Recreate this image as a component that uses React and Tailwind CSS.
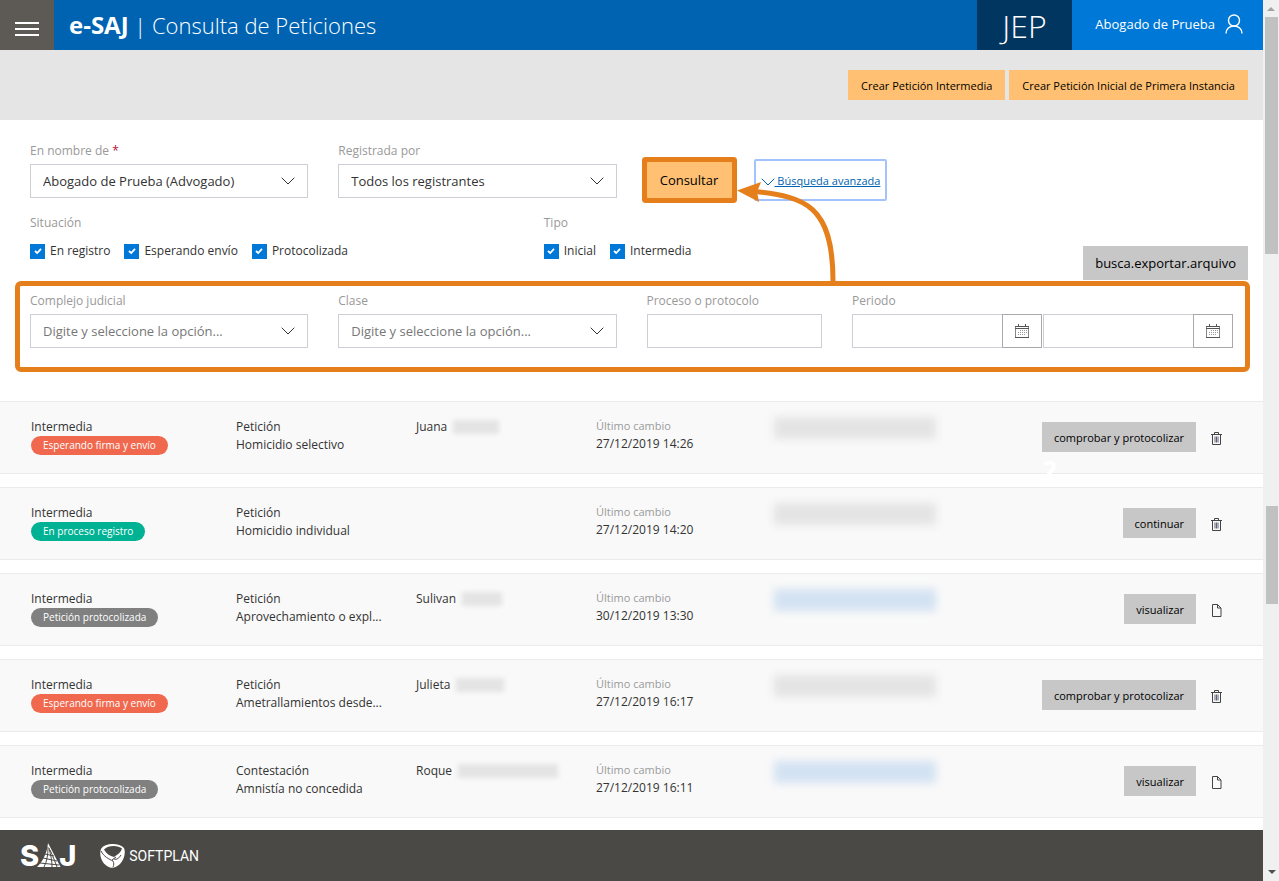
const situaciones = ["En registro", "Esperando envío", "Protocolizada"];
const tipos = ["Inicial", "Intermedia"];

const estados = {
  firma: { label: "Esperando firma y envío", color: "bg-[#f0694f]" },
  registro: { label: "En proceso registro", color: "bg-[#00b294]" },
  protocolizada: { label: "Petición protocolizada", color: "bg-[#808080]" },
};

const peticiones = [
  { estado: "firma", clase: "Petición", asunto: "Homicidio selectivo", nombre: "Juana", oculto: "w-[46px]", fecha: "27/12/2019 14:26", accion: "comprobar y protocolizar" },
  { estado: "registro", clase: "Petición", asunto: "Homicidio individual", fecha: "27/12/2019 14:20", accion: "continuar" },
  { estado: "protocolizada", clase: "Petición", asunto: "Aprovechamiento o expl...", nombre: "Sulivan", oculto: "w-10", fecha: "30/12/2019 13:30", accion: "visualizar" },
  { estado: "firma", clase: "Petición", asunto: "Ametrallamientos desde...", nombre: "Julieta", oculto: "w-12", fecha: "27/12/2019 16:17", accion: "comprobar y protocolizar" },
  { estado: "protocolizada", clase: "Contestación", asunto: "Amnistía no concedida", nombre: "Roque", oculto: "w-[100px]", fecha: "27/12/2019 16:11", accion: "visualizar" },
];

function Chevron({ className }) {
  return (
    <svg viewBox="0 0 14 8" fill="none" stroke="currentColor" className={className}>
      <path d="M0.7 0.7 7 7 13.3 0.7" />
    </svg>
  );
}

function CalendarIcon() {
  return (
    <svg width="14" height="14" viewBox="0 0 14 14" fill="none" stroke="#555" shapeRendering="crispEdges">
      <path d="M0.5 2v11M13.5 2v11" stroke="#888" />
      <path d="M0 2.5h14M0 13.5h14M0 4.5h14M3.5 0v2M10.5 0v2" />
      <path d="M5 6.5h7M3 8.5h9M3 10.5h7" stroke="#999" strokeDasharray="1 1" />
    </svg>
  );
}

function TrashIcon() {
  return (
    <svg width="11" height="13" viewBox="0 0 11 13" fill="none" stroke="#444">
      <path d="M0 2.5h11M3.5 2V0.5h4V2M1.5 2.5v10h8v-10" />
      <path d="M4 4.5v6M5.5 4.5v6M7 4.5v6" stroke="#5d6478" />
    </svg>
  );
}

function FileIcon() {
  return (
    <svg width="11" height="13" viewBox="0 0 11 13" fill="none" stroke="#444">
      <path d="M1.5 0.5h5l3.5 3.5v8.5h-8.5zM6.5 0.5v3.5h3.5" />
    </svg>
  );
}

function Select({ id, label, value, required, muted }) {
  return (
    <div className="col-span-3">
      <label htmlFor={id} className="mb-[3px] block pt-px text-[#999]">
        {label} {required && <span className="text-[#b5123e]">*</span>}
      </label>
      <div className="relative">
        <select
          id={id}
          className={`h-[34px] w-full appearance-none border border-[#ccd0d6] bg-white pr-8 pl-3 text-[13px] ${muted ? "text-[#777]" : "text-[#333]"}`}
        >
          <option>{value}</option>
        </select>
        <Chevron className="pointer-events-none absolute top-[13px] right-[13px] h-2 w-3.5 text-[#333]" />
      </div>
    </div>
  );
}

function Checks({ title, items }) {
  return (
    <fieldset>
      <legend className="mb-2 pt-px text-[#999]">{title}</legend>
      <div className="flex gap-3.5">
        {items.map((item) => (
          <label key={item} className="flex items-center gap-[5px]">
            <span className="grid size-[15px] place-items-center">
              <input type="checkbox" defaultChecked className="col-start-1 row-start-1 size-[15px] appearance-none bg-[#0078d7]" />
              <svg viewBox="0 0 8 8" fill="none" stroke="white" className="pointer-events-none col-start-1 row-start-1 size-2">
                <path d="M1 4 3.2 6 7 1.8" strokeWidth="1.8" />
              </svg>
            </span>
            {item}
          </label>
        ))}
      </div>
    </fieldset>
  );
}

function DateField({ label }) {
  return (
    <div className="flex h-[34px] flex-1">
      <input type="text" aria-label={label} className="w-0 flex-1 border border-r-0 border-[#ccd0d6] px-3" />
      <button type="button" aria-label="Abrir calendario" className="grid w-10 place-items-center border border-[#aaa]">
        <CalendarIcon />
      </button>
    </div>
  );
}

function Peticion({ item, first }) {
  const estado = estados[item.estado];
  const final = item.estado === "protocolizada";
  return (
    <li className="relative grid h-[73px] grid-cols-[205fr_180fr_180fr_178fr_459fr] border-y border-[#ebebeb] bg-[#f9f9f9] pt-[15px] pr-[30px] pl-[31px] leading-[18px]">
      <div className="pt-px">
        <p>Intermedia</p>
        <span className={`block h-[19px] w-fit rounded-full px-3 text-[10px] leading-[19px] text-white ${estado.color}`}>{estado.label}</span>
      </div>
      <div className="pt-px">
        <p>{item.clase}</p>
        <p>{item.asunto}</p>
      </div>
      <div className="flex items-start gap-1.5 pt-px">
        {item.nombre}
        {item.nombre && <span className={`mt-0.5 h-3.5 bg-[#e4e4e4] blur-[2px] ${item.oculto}`} />}
      </div>
      <div>
        <p className="text-[11px] leading-[18px] text-[#999]">Último cambio</p>
        <p>{item.fecha}</p>
      </div>
      <div className="flex items-start">
        <span className={`h-[22px] w-[162px] blur-[4px] ${final ? "bg-[#d3e2f2]" : "bg-[#e4e4e4]"}`} />
        <button type="button" className="mt-[5px] ml-auto h-[30px] bg-[#c7c7c7] px-3 pt-0.5 text-[11px] text-black">{item.accion}</button>
        <button type="button" aria-label={final ? "Ver documento" : "Eliminar"} className="mt-[15px] mr-[11px] ml-[15px]">
          {final ? <FileIcon /> : <TrashIcon />}
        </button>
      </div>
      {first && <span className="absolute right-[206px] -bottom-1.5 text-[26px] font-bold text-white">2</span>}
    </li>
  );
}

function Header() {
  return (
    <header className="flex h-[50px] bg-[#0063b1] text-white">
      <button type="button" aria-label="Menú" className="flex w-[54px] flex-col items-center justify-center gap-1 bg-[#5d5a55] pt-2">
        <span className="h-0.5 w-6 bg-white" />
        <span className="h-0.5 w-6 bg-white" />
        <span className="h-0.5 w-6 bg-white" />
      </button>
      <h1 className="pl-[15px] text-[22px] leading-[50px] font-light">
        <b className="text-2xl leading-[50px] font-bold">e-SAJ</b> | Consulta de Peticiones
      </h1>
      <div className="ml-auto w-[95px] bg-[#00365f] text-center text-[32px] leading-[52px] font-light">JEP</div>
      <button type="button" className="flex w-[191px] items-center justify-end gap-2.5 bg-[#0078d7] pr-5 pb-0.5 text-[13px]">
        Abogado de Prueba
        <svg width="18" height="20" viewBox="0 0 18 20" fill="none" stroke="white" strokeWidth="1.4">
          <circle cx="9" cy="6.5" r="5.5" />
          <path d="M1 19.5c0-4.5 3.5-7.5 8-7.5s8 3 8 7.5" />
        </svg>
      </button>
    </header>
  );
}

function Footer() {
  return (
    <footer className="flex h-[51px] items-center bg-[#4a4946] pl-5 text-white">
      <div className="flex items-center font-[Inter] text-[29px] leading-none font-extrabold">
        S
        <svg width="24" height="25" viewBox="0 0 24 25" className="-mx-0.5" fill="none">
          <path d="M11 0 23.5 24H0C6 18 10 10 11 0z" fill="white" />
          <path d="M11 4c0 8-1 14-4 20M12 5c2 8 3 13 3 19M13 7c3 6 5 12 7 17M8 11l9 2M6 15l14 3M3 20l19 2" stroke="#4a4946" />
        </svg>
        J
      </div>
      <div className="ml-6 flex items-center gap-1">
        <svg width="25" height="25" viewBox="0 0 25 25">
          <path d="M1 6C4 0 19-1 24 5c2 5 0 12-4 16-4 4-9 5-13 2C1 19-1 11 1 6z" fill="white" />
          <path d="M4 6.5c4-4.5 14-4.5 18-1-1 3.5-4 6-8 8.5C10 13 6 10.5 4 6.5z" fill="#4a4946" />
          <path d="M1 8c3 6 8 8 12 10 1 2 1 4 0 6M14 16c3 1 5-1 7-4M12 17l4-3" fill="none" stroke="#4a4946" />
        </svg>
        <span className="font-[Roboto] text-sm leading-none">SOFTPLAN</span>
      </div>
    </footer>
  );
}

export default function App() {
  return (
    <div className="flex min-h-screen bg-white font-['Open_Sans','Noto_Sans',sans-serif] text-xs leading-5 text-[#333]">
      <div className="flex min-w-0 flex-1 flex-col">
        <Header />

        <div className="flex h-[70px] items-center justify-end gap-1 bg-[#e5e5e5] pr-[15px] text-[11px] text-black">
          <button type="button" className="h-[30px] bg-[#ffc073] px-[13px] pt-0.5">Crear Petición Intermedia</button>
          <button type="button" className="h-[30px] bg-[#ffc073] px-[13px] pt-0.5">Crear Petición Inicial de Primera Instancia</button>
        </div>

        <form className="pt-5">
          <div className="grid grid-cols-12 gap-x-[30px] px-[30px]">
            <Select id="nombre" label="En nombre de" value="Abogado de Prueba (Advogado)" required />
            <Select id="registrante" label="Registrada por" value="Todos los registrantes" />
            <div className="relative col-span-6 flex items-center gap-[22px] self-start pt-[19px]">
              <button type="button" className="h-9 w-[85px] rounded-[1px] bg-[#ffc073] text-[13px] text-black ring-[5px] ring-[#e57f1c]">Consultar</button>
              <a href="#avanzada" className="flex h-[42px] items-center rounded-xs border-2 border-[#a3c3ff] px-[5px] text-[11px] text-[#0063b1]">
                <Chevron className="mt-1 h-2 w-3.5" />
                <span className="pt-0.5 whitespace-pre underline"> Búsqueda avanzada</span>
              </a>
              <svg width="104" height="102" viewBox="0 0 104 102" fill="none" className="pointer-events-none absolute top-10 left-[89px]">
                <path d="M19 11.5C69 17 97 25 97 101" stroke="#e57f1c" strokeWidth="5" />
                <path d="M1 10.5 25 2l-4 10 2 10z" fill="#e57f1c" />
              </svg>
            </div>
          </div>

          <div className="mt-[11px] grid h-[68px] grid-cols-12 gap-x-[30px] px-[30px]">
            <div className="col-span-5"><Checks title="Situación" items={situaciones} /></div>
            <div className="col-span-4"><Checks title="Tipo" items={tipos} /></div>
            <button type="button" className="col-span-3 -mr-[15px] h-[34px] self-end justify-self-end bg-[#c7c7c7] px-3 text-[13px] text-black">busca.exportar.arquivo</button>
          </div>

          <div className="mt-px mr-[13px] ml-[15px] grid grid-cols-12 gap-x-[30px] rounded-md border-[5px] border-[#e57f1c] pt-1 pr-3 pb-[19px] pl-2.5">
            <Select id="complejo" label="Complejo judicial" value="Digite y seleccione la opción..." muted />
            <Select id="clase" label="Clase" value="Digite y seleccione la opción..." muted />
            <div className="col-span-2">
              <label htmlFor="proceso" className="mb-[3px] block pt-px text-[#999]">Proceso o protocolo</label>
              <input id="proceso" type="text" className="h-[34px] w-full border border-[#ccd0d6] px-3" />
            </div>
            <fieldset className="col-span-4">
              <legend className="mb-[3px] pt-px text-[#999]">Periodo</legend>
              <div className="flex gap-px">
                <DateField label="Fecha inicial" />
                <DateField label="Fecha final" />
              </div>
            </fieldset>
          </div>
        </form>

        <ul className="mt-[29px] flex flex-col gap-[13px] pb-3">
          {peticiones.map((item, i) => (
            <Peticion key={i} item={item} first={i === 0} />
          ))}
        </ul>

        <Footer />
      </div>

      <div aria-hidden="true" className="flex w-4 flex-col items-end bg-[#f0f0f0] pr-px">
        <svg width="12" height="17" viewBox="0 0 12 17"><path d="M1 11 5 7l4 4z" fill="#a3a3a3" /></svg>
        <div className="h-[237px] w-[13px] bg-[#c1c1c1]" />
        <div className="mt-[252px] h-[98px] w-3 bg-[#c1c1c1]" />
        <svg width="12" height="12" viewBox="0 0 12 12" className="mt-auto"><path d="M2 1h8L6 5z" fill="#505050" /></svg>
      </div>
    </div>
  );
}
